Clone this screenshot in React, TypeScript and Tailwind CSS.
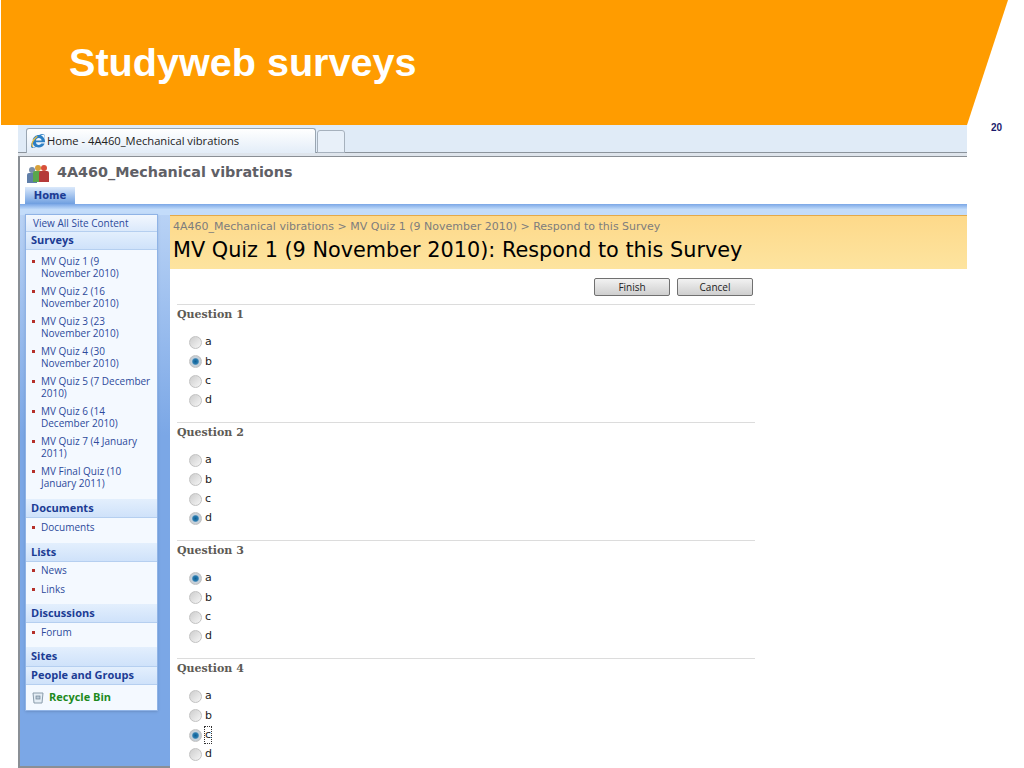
import { FaInternetExplorer } from 'react-icons/fa'

interface NavGroup {
  title: string
  height: string
  pad: string
  items: string[][]
}

const groups: NavGroup[] = [
  {
    title: 'Surveys',
    height: 'h-[18px]',
    pad: 'pt-[5px] pb-[4px]',
    items: [
      ['MV Quiz 1 (9', 'November 2010)'],
      ['MV Quiz 2 (16', 'November 2010)'],
      ['MV Quiz 3 (23', 'November 2010)'],
      ['MV Quiz 4 (30', 'November 2010)'],
      ['MV Quiz 5 (7 December', '2010)'],
      ['MV Quiz 6 (14', 'December 2010)'],
      ['MV Quiz 7 (4 January', '2011)'],
      ['MV Final Quiz (10', 'January 2011)'],
    ],
  },
  { title: 'Documents', height: 'h-[19px]', pad: 'pt-[3px] pb-[3px]', items: [['Documents']] },
  { title: 'Lists', height: 'h-[19px]', pad: 'pt-[2px] pb-[2px]', items: [['News'], ['Links']] },
  { title: 'Discussions', height: 'h-[19px]', pad: 'pt-[3px] pb-[2px]', items: [['Forum']] },
]

const questions = [
  { title: 'Question 1', answer: 'b' },
  { title: 'Question 2', answer: 'd' },
  { title: 'Question 3', answer: 'a' },
  { title: 'Question 4', answer: 'c' },
]

function NavHeading({ height, children }: { height: string; children: string }) {
  return (
    <div className={`${height} pl-[5px] flex items-center bg-gradient-to-b from-[#e3effd] to-[#cfe2fa] border-b border-[#b5cff0] text-[11px] font-bold text-[#1c3c94]`}>
      {children}
    </div>
  )
}

function Sidebar() {
  return (
    <div className="w-[150px] shrink-0 pl-[5px] border-b-[2px] border-[#8a8f95] bg-gradient-to-b from-[#b8d2f5] to-[#7ba7e6] to-40%">
      <div className="w-[133px] -mt-[1px] bg-[#f4f9ff] border border-[#8fb3e6] font-['Open_Sans','Liberation_Sans',sans-serif] shadow-sm">
        <div className="h-[17px] pl-[7px] flex items-center bg-gradient-to-b from-[#f2f7fe] to-[#dbe9fb] border-b border-[#b5cff0] text-[10px] text-[#2d4a9b]">
          View All Site Content
        </div>
        {groups.map((group) => (
          <div key={group.title}>
            <NavHeading height={group.height}>{group.title}</NavHeading>
            <ul className={group.pad}>
              {group.items.map((lines) => (
                <li
                  key={lines[0]}
                  className={`flex pl-[6px] text-[10px] leading-[12px] text-[#2d4a9b] ${lines.length > 1 ? 'pb-[6px]' : 'pb-[7px]'}`}
                >
                  <span className="w-[3px] h-[3px] mt-[5px] mr-[6px] shrink-0 bg-[#b5302a]" />
                  <span>
                    {lines.map((line) => (
                      <span key={line} className="block whitespace-nowrap">
                        {line}
                      </span>
                    ))}
                  </span>
                </li>
              ))}
            </ul>
          </div>
        ))}
        <NavHeading height="h-[20px]">Sites</NavHeading>
        <NavHeading height="h-[18px]">People and Groups</NavHeading>
        <div className="h-[25px] pl-[6px] flex items-center gap-[5px] text-[11px] font-bold text-[#1d8a1d]">
          <svg width="12" height="13" viewBox="0 0 12 13" fill="none">
            <path d="M1 2h10l-1 10H2z" fill="#e4edf5" stroke="#8a9cab" />
            <rect x="4" y="5" width="4" height="3" fill="#b8c8d6" stroke="#6f8394" strokeWidth="0.7" />
          </svg>
          Recycle Bin
        </div>
      </div>
    </div>
  )
}

function Radio({ checked }: { checked: boolean }) {
  return (
    <span
      className={`w-[13px] h-[13px] rounded-full border border-[#c2c2c2] ${
        checked
          ? 'bg-[radial-gradient(circle,#0f5f95_0%,#2a7cb0_34%,#c9d3dc_50%,#b8bec4_100%)]'
          : 'bg-gradient-to-br from-[#cdcdcd] to-[#f6f6f6]'
      }`}
    />
  )
}

function Question({ title, answer }: { title: string; answer: string }) {
  return (
    <div className="h-[118px] border-t border-[#dcdcdc]">
      <div className="pt-[2px] h-[28px] text-[11px] leading-[15px] font-bold font-['DejaVu_Serif',serif] text-[#5d5a55]">
        {title}
      </div>
      <div className="pl-[12px]">
        {['a', 'b', 'c', 'd'].map((option) => (
          <div key={option} className="h-[19.3px] flex items-center gap-[3px] text-[11px] text-[#222]">
            <Radio checked={option === answer} />
            <span className={option === 'c' && answer === 'c' ? 'outline-1 outline-dotted outline-[#333]' : ''}>{option}</span>
          </div>
        ))}
      </div>
    </div>
  )
}

function Content() {
  return (
    <div className="flex-1 bg-white font-['DejaVu_Sans',sans-serif]">
      <div className="h-[54px] pl-[3px] pt-[4px] bg-gradient-to-b from-[#fdd98a] to-[#fde49f] border-t border-[#e3a94a]">
        <div className="text-[11px] leading-[13px] text-[#7d7d7d]">
          4A460_Mechanical vibrations &gt; MV Quiz 1 (9 November 2010) &gt; Respond to this Survey
        </div>
        <div className="mt-[3px] text-[20.8px] leading-[28px] text-black whitespace-nowrap">
          MV Quiz 1 (9 November 2010): Respond to this Survey
        </div>
      </div>
      <div className="ml-[7px] w-[578px]">
        <div className="h-[35px] pt-[9px] flex justify-end gap-[7px] pr-[2px]">
          <button className="w-[76px] h-[18px] rounded-[2px] border border-[#707070] bg-gradient-to-b from-[#f2f2f2] to-[#cfcfcf] font-['Open_Sans',sans-serif] text-[10px] text-[#222]">
            Finish
          </button>
          <button className="w-[76px] h-[18px] rounded-[2px] border border-[#707070] bg-gradient-to-b from-[#f2f2f2] to-[#cfcfcf] font-['Open_Sans',sans-serif] text-[10px] text-[#222]">
            Cancel
          </button>
        </div>
        {questions.map((question) => (
          <Question key={question.title} {...question} />
        ))}
      </div>
    </div>
  )
}

export default function App() {
  return (
    <div className="w-[1024px] h-[768px] overflow-hidden bg-white font-['Liberation_Sans',sans-serif]">
      <div className="h-[125px] pl-[69px] pt-[40px] bg-[#ff9c00] [clip-path:polygon(1px_0,1008px_0,967px_100%,1px_100%)]">
        <h1 className="text-[39.6px] leading-[44px] font-bold text-white">Studyweb surveys</h1>
      </div>
      <div className="relative ml-[18px] w-[949px] h-[643px] flex flex-col">
        <div className="h-[32px] shrink-0 flex flex-col bg-[#dfe5ec] border-b border-[#8a8f95]">
          <div className="h-[28px] shrink-0 pl-[8px] pt-[3px] flex bg-[#e0ebf7] border-b border-[#8c949c]">
            <div className="w-[290px] h-[25px] pl-[4px] flex items-center gap-[2px] bg-gradient-to-b from-white to-[#e3edf8] border border-b-0 border-[#9aa6b2] rounded-t-[3px] font-['Open_Sans',sans-serif] text-[11.2px] text-[#222]">
              <span className="relative w-[14px] h-[14px]">
                <FaInternetExplorer className="w-[14px] h-[14px] text-[#2c7fc4]" />
                <svg className="absolute inset-0" width="14" height="14" viewBox="0 0 14 14" fill="none">
                  <path d="M1.5 12.5C0 10 2 5.500 6 2.500" stroke="#e8b93c" strokeWidth="1.200" strokeLinecap="round" />
                </svg>
              </span>
              Home - 4A460_Mechanical vibrations
            </div>
            <div className="ml-[1px] mt-[2px] w-[28px] h-[23px] bg-[#e8f0f9] border border-[#a6b1bd] rounded-t-[3px]" />
          </div>
        </div>
        <div className="flex-1 min-h-0 flex flex-col border-l-[2px] border-[#8a8f95] bg-white">
          <div className="h-[30px] shrink-0 pt-[2px] pl-[7px] flex items-center gap-[8px]">
            <svg width="22" height="19" viewBox="0 0 22 19">
              <circle cx="5" cy="6" r="3" fill="#7b8fa8" />
              <path d="M0 19V11q0-2 2-2h6q2 0 2 2v8z" fill="#5f7ea8" />
              <circle cx="11" cy="4" r="3" fill="#d8a13a" />
              <path d="M6 18V9q0-2 2-2h6q2 0 2 2v9z" fill="#5aa64a" />
              <circle cx="17" cy="4" r="3" fill="#d8503a" />
              <path d="M12 18V9q0-2 2-2h6q2 0 2 2v9z" fill="#b53a3a" />
            </svg>
            <span className="font-['DejaVu_Sans',sans-serif] text-[14.35px] font-bold text-[#5f6066]">4A460_Mechanical vibrations</span>
          </div>
          <div className="h-[17px] shrink-0 pl-[5px]">
            <div className="w-[50px] h-[17px] flex items-center justify-center bg-gradient-to-b from-[#dbe9fb] to-[#6f9fe0] font-['DejaVu_Sans',sans-serif] text-[10px] font-bold text-[#1c3c94]">
              Home
            </div>
          </div>
          <div className="h-[11px] shrink-0 bg-gradient-to-b from-[#7ba7e6] via-[#c3dcfa] to-[#c3dcfa]" />
          <div className="flex-1 min-h-0 flex">
            <Sidebar />
            <Content />
          </div>
        </div>
        <span className="absolute left-[973px] top-[-5px] text-[10px] font-bold text-[#1c1c6b]">20</span>
      </div>
    </div>
  )
}
